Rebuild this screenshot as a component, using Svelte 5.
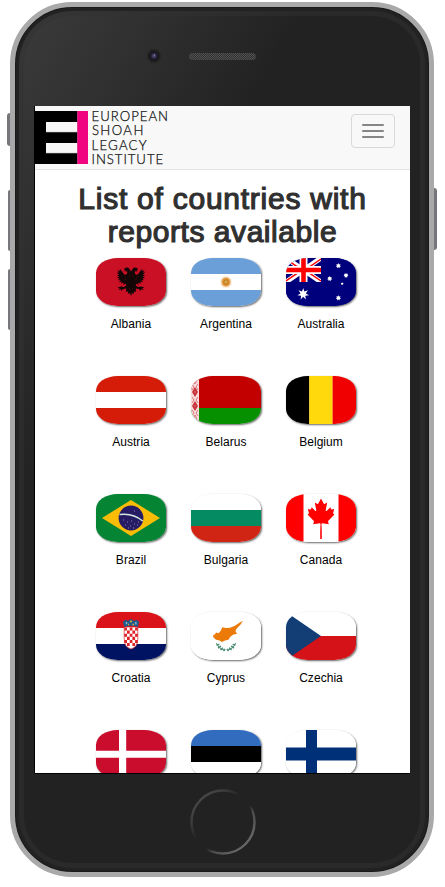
<script>
  const rect = (x, y, w, h) => `M${x} ${y}h${w}v${h}h${-w}z`;

  const star = (cx, cy, r, n = 7, inner = 0.58) => {
    let d = '';
    for (let i = 0; i < n * 2; i++) {
      const a = -Math.PI / 2 + (i * Math.PI) / n;
      const k = i % 2 ? r * inner : r;
      d += `${i ? 'L' : 'M'}${(cx + k * Math.cos(a)).toFixed(2)} ${(cy + k * Math.sin(a)).toFixed(2)}`;
    }
    return d + 'z';
  };

  const circle = (cx, cy, r) => `M${cx - r} ${cy}a${r} ${r} 0 1 0 ${2 * r} 0a${r} ${r} 0 1 0 ${-2 * r} 0z`;

  // Horizontal bands listed as [colour, height] pairs
  const bands = (...list) => {
    let y = 0;
    return list.map(([fill, h]) => {
      const shape = { d: rect(0, y, 70, h), fill };
      y += h;
      return shape;
    });
  };

  // Red squares of the Croatian shield
  let checks = '';
  for (let r = 0; r < 6; r++)
    for (let c = 0; c < 5; c++)
      if ((r + c) % 2 === 0 && !(r === 5 && (c === 0 || c === 4)))
        checks += rect(28.3 + c * 2.7, 15.5 + r * 3.1, 2.7, 3.1);

  const countries = [
    {
      name: 'Albania',
      shapes: [
        { d: rect(0, 0, 70, 48), fill: '#c91024' },
        {
          d: 'M34.8 14L36.2 11.5L38 9.6L40.6 9.8L42.4 11.6L40.6 11.8L41.6 13.4L39.3 13L38.6 15L40 16.8L42 16.2L44.3 13L46.3 10.8L46 13L48.8 12.2L46.8 14.6L49.4 14.6L46.8 16.6L49.2 17.2L46.6 18.6L49 19.8L46.2 20.4L48.2 22.2L45.4 22L47 24.2L44.2 23.4L45 25.8L42.4 24.4L42.4 27L40.4 25.4L39.6 27.4L42 29L44.8 28.6L48.6 29.4L46.2 30.4L48 32L45.2 31.2L44.4 33L43 31L39.8 30.6L40 34L38.2 33.2L37.6 36L36 35L34.8 38z',
          fill: '#120606', mirror: true
        },
        { d: 'M36.5 16.5L36 19M39.7 20L42 18M39 22L41.5 21.5M36.6 29.5L36 32', fill: 'none', stroke: '#5a0d16', w: 0.5, mirror: true }
      ]
    },
    {
      name: 'Argentina',
      shapes: [
        ...bands(['#6b9fd7', 16], ['#fff', 16], ['#6b9fd7', 16]),
        { d: star(35, 24, 6.4, 16, 0.7), fill: '#f1c99b' },
        { d: circle(35, 24, 3.9), fill: '#dc902b' },
        { d: circle(35, 24, 2), fill: '#e5a941', stroke: '#9d6830', w: 0.6 }
      ]
    },
    {
      name: 'Australia',
      shapes: [
        { d: rect(0, 0, 70, 48), fill: '#00007d' },
        { d: 'M0 0L35 24M35 0L0 24', fill: 'none', stroke: '#fff', w: 5 },
        { d: 'M0 1L17 12.7M35 1L18 12.7M0 23L17 11.3M35 23L18 11.3', fill: 'none', stroke: '#f00', w: 1.5 },
        { d: 'M17.5 0V24M0 12H35', fill: 'none', stroke: '#fff', w: 8 },
        { d: 'M17.5 0V24M0 12H35', fill: 'none', stroke: '#f00', w: 4.6 },
        { d: rect(35, 0, 35, 48) + rect(0, 24, 35, 24), fill: '#00007d' },
        { d: star(17.2, 36, 6, 7, 0.45), fill: '#fff' },
        { d: star(52.4, 7.8, 2.7) + star(60, 17.4, 2.6) + star(43.7, 20.7, 2.6) + star(52.4, 40, 2.7) + star(56.2, 25.7, 1.5, 5), fill: '#fff' }
      ]
    },
    { name: 'Austria', shapes: bands(['#d51c09', 16], ['#fff', 16], ['#d51c09', 16]) },
    {
      name: 'Belarus',
      shapes: [
        ...bands(['#c30000', 32], ['#069000', 16]),
        { d: rect(0, 0, 8, 48), fill: '#f7dcdd' },
        {
          d: 'M4 11L7 16L4 21L1 16zM4 25L7 30L4 35L1 30z',
          fill: '#c83238'
        },
        { d: 'M1 8L3 11L1 14M7 8L5 11L7 14M1 21L3 24L1 27M7 21L5 24L7 27M1 34L3 37L1 40M7 34L5 37L7 40M4 3V5M3 16H5M3 30H5M4 0L6 4L4 8L2 4zM4 39L6 43L4 47L2 43z', fill: 'none', stroke: '#de7679', w: 1 }
      ]
    },
    {
      name: 'Belgium',
      shapes: [
        { d: rect(0, 0, 23.4, 48), fill: '#000' },
        { d: rect(23.3, 0, 23.4, 48), fill: '#ffd90c' },
        { d: rect(46.6, 0, 23.4, 48), fill: '#f00000' }
      ]
    },
    {
      name: 'Brazil',
      shapes: [
        { d: rect(0, 0, 70, 48), fill: '#058534' },
        { d: 'M6 24L35 6L64 24L35 42z', fill: '#f9bd08' },
        { d: circle(35, 24, 12.4), fill: '#261b65' },
        { d: 'M23.5 20.5Q37 18.7 46.7 27', fill: 'none', stroke: '#d5eadf', w: 1.6 },
        { d: 'M27 26h1M31 28h1M29 31h1M34 32h1M38 30h1M35 27h1M41 31h1M37 34h1M32 34h1M42 28h1M38 17h1', fill: 'none', stroke: '#a4a0c5', w: 0.8 }
      ]
    },
    { name: 'Bulgaria', shapes: bands(['#fff', 16], ['#058b61', 16], ['#d02415', 16]) },
    {
      name: 'Canada',
      shapes: [
        { d: rect(0, 0, 70, 48), fill: '#fff' },
        { d: rect(0, 0, 17.5, 48) + rect(52.5, 0, 17.5, 48), fill: '#fe0000' },
        {
          d: 'M35 4.5L37.7 9.6Q38.2 10.1 39 9.7L41.2 8.5L39.7 16.4Q39.9 17.6 40.9 16.8L44.3 13.2L45 15.1Q45.2 15.6 46 15.5L48.2 14.9L47.2 18.8Q47 19.5 47.4 19.8L48.4 20.4L42.4 26.8Q41.9 27.3 42.1 27.8L42.8 30.2L36.2 29.2Q35.5 29.2 35.5 29.9L35.8 37.5V45H35z',
          fill: '#fe0000', mirror: true
        }
      ]
    },
    {
      name: 'Croatia',
      shapes: [
        ...bands(['#d91319', 16], ['#fff', 16], ['#001363', 16]),
        { d: 'M28.2 15H41.8V27Q41.8 35 35 37Q28.2 35 28.2 27z', fill: '#fff', stroke: '#dc2b31', w: 0.7 },
        { d: checks, fill: '#df2128' },
        { d: 'M28.3 15L26.8 10L29.3 7.7L32 9L35 6.8L38 9L40.7 7.7L43.2 10L41.7 15Q35 12.7 28.3 15z', fill: '#245a8b' },
        { d: 'M30.5 10v2.2M39.8 10v2.4', fill: 'none', stroke: '#8dbbbd', w: 1.4 },
        { d: 'M34 9.5h2M36.5 12.5h1.5M32 12.5h1', fill: 'none', stroke: '#d8b332', w: 1.3 }
      ]
    },
    {
      name: 'Cyprus',
      shapes: [
        { d: rect(0, 0, 70, 48), fill: '#fff' },
        {
          d: 'M22 23.5L24 22.3L25 20.5L27.5 21.3L29.8 18.8L31.2 15.2L34.8 16L39 15.7L44 13.8L48 11L52 8.8L49.6 12.5L45.3 17L44.5 19.5L46.2 21.8L42.5 22.4L39.3 24.8L37.5 27.8L34 28.6L31 30L28.5 28.6L25 27.8L22.3 25.2z',
          fill: '#ec7a08'
        },
        { d: 'M25.4 31Q27.5 37 34 38.2', fill: 'none', stroke: '#59967e', w: 1, mirror: true },
        { d: 'M25.5 33L28.4 32.6M27 36L30 34.2M29.5 38L32 35.8M32.5 39L34 37', fill: 'none', stroke: '#4b8d73', w: 1.5, mirror: true }
      ]
    },
    {
      name: 'Czechia',
      shapes: [...bands(['#fff', 24], ['#d41218', 24]), { d: 'M0 0L35 24L0 48z', fill: '#123d75' }]
    },
    // Denmark, Estonia, Finland: the fold cuts this row above its captions
    {
      shapes: [
        { d: rect(0, 0, 70, 48), fill: '#ca0c2d' },
        { d: rect(23, 0, 7.2, 48) + rect(0, 20.7, 70, 7), fill: '#fff' }
      ]
    },
    { shapes: bands(['#326cbe', 16], ['#000', 16], ['#fff', 16]) },
    {
      shapes: [
        { d: rect(0, 0, 70, 48), fill: '#fff' },
        { d: rect(20, 0, 11, 48) + rect(0, 17.4, 70, 13.2), fill: '#003077' }
      ]
    }
  ];
</script>

<div class="stage">
  <div class="phone">
    <i class="key mute"></i>
    <i class="key up"></i>
    <i class="key down"></i>
    <i class="key power"></i>

    <div class="top">
      <svg width="125" height="20" viewBox="0 0 125 20">
        <defs>
          <pattern id="mesh" width="2" height="2" patternUnits="userSpaceOnUse">
            <rect width="2" height="2" fill="#303030" />
            <rect width="1" height="1" fill="#525252" />
            <rect x="1" y="1" width="1" height="1" fill="#525252" />
          </pattern>
        </defs>
        <circle cx="10" cy="10" r="7" fill="#202020" stroke="#2a2a2a" />
        <circle cx="10" cy="10" r="4.2" fill="#272238" stroke="#111015" />
        <circle cx="10" cy="10" r="2" fill="#4a4068" />
        <circle cx="10.4" cy="9" r="0.8" fill="#8f88a8" />
        <rect x="45" y="7" width="67" height="7" rx="3.5" fill="url(#mesh)" />
      </svg>
    </div>

    <main class="screen">
      <header>
        <svg class="logo" width="140" height="53" viewBox="0 0 140 53">
          <rect width="42.5" height="53" fill="#000" />
          <path d="M11 11H42.5V21H11zM11 32H42.5V42H11z" fill="#f8f8f8" />
          <path d="M11 21.3H42.5M11 42.3H42.5" stroke="#777" stroke-width="0.6" />
          <rect x="42.3" width="10.7" height="53" fill="#f0047f" />
          <g class="wordmark">
            <text x="56.6" y="10" textLength="76.4">EUROPEAN</text>
            <text x="56.9" y="24.2" textLength="51.5">SHOAH</text>
            <text x="56.6" y="38.8" textLength="55">LEGACY</text>
            <text x="56.6" y="53" textLength="71.5">INSTITUTE</text>
          </g>
        </svg>
        <button aria-label="Menu"><span></span><span></span><span></span></button>
      </header>

      <h1><span class="l1">List of countries with</span><br /><span class="l2">reports available</span></h1>

      <div class="grid">
        {#each countries as country}
          <div class="country">
            <svg class="flag" width="70" height="48" viewBox="0 0 70 48">
              {#each country.shapes as s}
                <path d={s.d} fill={s.fill} stroke={s.stroke ?? 'none'} stroke-width={s.w ?? 0} />
                {#if s.mirror}
                  <path d={s.d} fill={s.fill} stroke={s.stroke ?? 'none'} stroke-width={s.w ?? 0} transform="matrix(-1 0 0 1 70 0)" />
                {/if}
              {/each}
            </svg>
            {#if country.name}
              <span class="name">{country.name}</span>
            {/if}
          </div>
        {/each}
      </div>
    </main>

    <div class="home">
      <svg width="68" height="68" viewBox="0 0 68 68">
        <defs>
          <linearGradient id="ring" x1="0.1" y1="0.1" x2="0.9" y2="0.9">
            <stop offset="0" stop-color="#4a4a4a" />
            <stop offset="0.2" stop-color="#3c3c3c" />
            <stop offset="0.4" stop-color="#222" />
            <stop offset="0.6" stop-color="#222" />
            <stop offset="0.7" stop-color="#4c4c4c" />
            <stop offset="1" stop-color="#6c6c6c" />
          </linearGradient>
        </defs>
        <circle cx="34" cy="34" r="31.5" fill="none" stroke="url(#ring)" stroke-width="2.4" />
      </svg>
    </div>
  </div>
</div>

<style>
  :global(body) {
    margin: 0;
    background: #fff;
  }
  .stage {
    box-sizing: border-box;
    width: 445px;
    height: 887px;
    padding: 2px 0 0 10px;
    overflow: hidden;
  }
  .phone {
    position: relative;
    box-sizing: border-box;
    width: 424px;
    height: 875px;
    border: 5px solid #a9a9a9;
    border-radius: 62px;
    padding: 0 19px 0 20px;
    background: linear-gradient(120deg, #3b3b3b 0, #303030 15%, #222 32%);
    box-shadow:
      inset 0 0 0 1px #1a1a1a,
      inset 0 0 0 4px #222,
      inset 0 0 0 9px rgba(50, 50, 50, 0.5);
  }
  .key {
    position: absolute;
    width: 3px;
    left: -8px;
    border-radius: 3px 0 0 3px;
    background: #77777b;
  }
  .mute { top: 106px; height: 33px; }
  .up { top: 183px; height: 61px; width: 2px; left: -7px; }
  .down { top: 262px; height: 61px; width: 2px; left: -7px; }
  .power {
    top: 181px;
    height: 62px;
    left: auto;
    right: -8px;
    border-radius: 0 3px 3px 0;
  }
  .top {
    height: 99px;
    display: flex;
    padding: 39px 0 0 109px;
    box-sizing: border-box;
  }
  .screen {
    height: 667px;
    background: #fff;
    overflow: hidden;
    box-shadow: -1px 0 0 #000, 0 1px 0 #000;
    font-family: "Liberation Sans", Arial, sans-serif;
  }
  header {
    box-sizing: border-box;
    height: 64px;
    display: flex;
    justify-content: space-between;
    align-items: flex-start;
    padding: 5px 15px 0 0;
    background: #f8f8f8;
    border-bottom: 1px solid #e3e3e3;
  }
  .logo {
    display: block;
    overflow: visible;
  }
  .wordmark {
    font-family: Lato, sans-serif;
    font-size: 13.2px;
    font-weight: 300;
    fill: #111;
    stroke: #111;
    stroke-width: 0.25px;
  }
  button {
    box-sizing: border-box;
    width: 44px;
    height: 34px;
    margin-top: 3px;
    padding: 0;
    border: 1px solid #d8d8d8;
    border-radius: 4px;
    background: transparent;
    display: flex;
    flex-direction: column;
    align-items: center;
    justify-content: center;
    gap: 4px;
  }
  button span {
    width: 22px;
    height: 2px;
    border-radius: 1px;
    background: #858585;
  }
  h1 {
    margin: 12px 0 0;
    font-size: 30px;
    line-height: 33px;
    font-weight: 400;
    -webkit-text-stroke: 1.2px #303030;
    text-align: center;
    white-space: nowrap;
    color: #303030;
  }
  .l1 { letter-spacing: 0.75px; }
  .l2 { letter-spacing: 0.55px; }
  .grid {
    display: grid;
    grid-template-columns: repeat(3, 70px);
    grid-auto-rows: 118px;
    column-gap: 25px;
    padding: 10px 0 0 61px;
  }
  .country {
    display: flex;
    flex-direction: column;
    align-items: center;
  }
  .flag {
    display: block;
    overflow: hidden;
    border-radius: 31%;
    box-shadow: 1px 1px 2px rgba(0, 0, 0, 0.6);
  }
  .name {
    margin-top: 10px;
    font-size: 12px;
    line-height: 17px;
    letter-spacing: 0.05px;
    color: #000;
  }
  .home {
    display: flex;
    justify-content: center;
    padding-top: 15px;
  }
</style>
